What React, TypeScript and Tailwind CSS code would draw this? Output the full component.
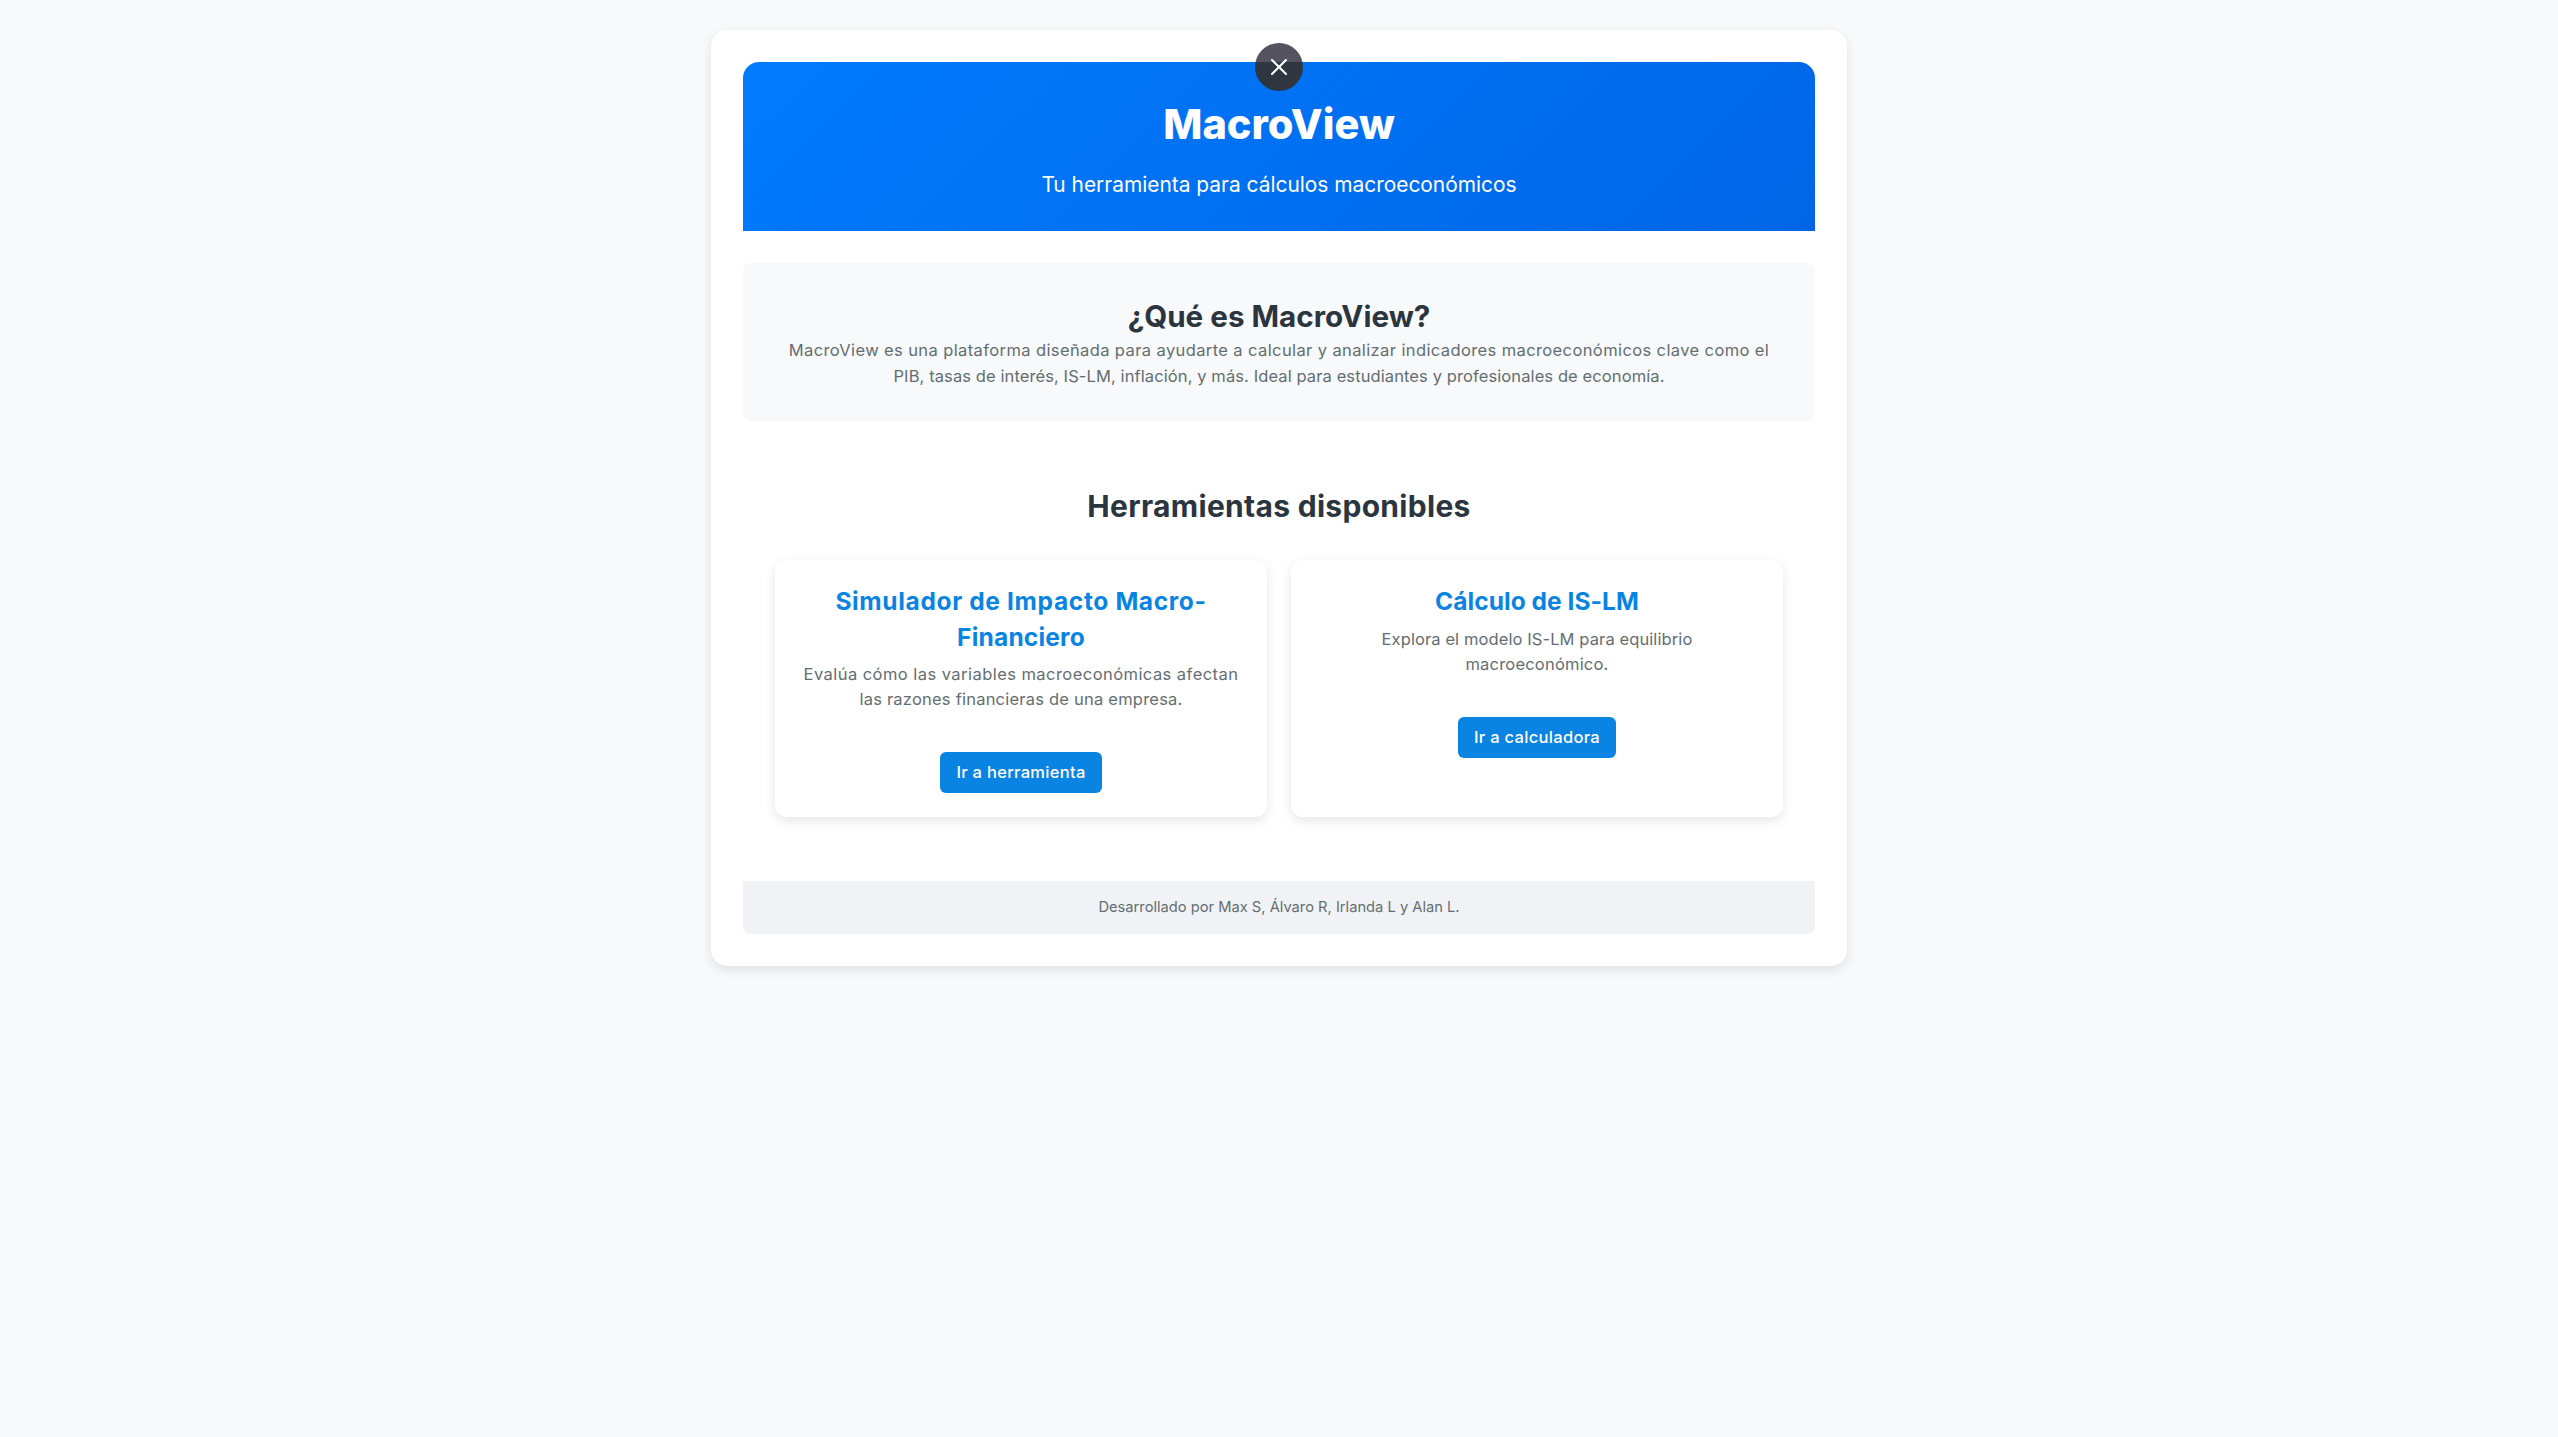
import { X } from "lucide-react"

const tools = [
  {
    title: [
      { line: "Simulador de Impacto Macro-", fit: "tracking-[0.65px]" },
      { line: "Financiero", fit: "tracking-[0.2px]" },
    ],
    text: [
      { line: "Evalúa cómo las variables macroeconómicas afectan", fit: "tracking-[0.45px]" },
      { line: "las razones financieras de una empresa.", fit: "tracking-[0.22px]" },
    ],
    cta: "Ir a herramienta",
  },
  {
    title: [{ line: "Cálculo de IS-LM", fit: "tracking-[0.05px]" }],
    text: [
      { line: "Explora el modelo IS-LM para equilibrio", fit: "tracking-[0.1px]" },
      { line: "macroeconómico.", fit: "tracking-[0.2px]" },
    ],
    cta: "Ir a calculadora",
  },
]

type Line = { line: string; fit: string }

function ToolCard({ title, text, cta }: { title: Line[]; text: Line[]; cta: string }) {
  return (
    <div className="flex flex-col items-center rounded-xl bg-white px-6 pt-6 pb-6 text-center shadow-[0_4px_12px_rgba(0,0,0,0.1)]">
      <h3 className="text-[24.5px] leading-[35.4px] font-bold text-[#0984e3]">
        {title.map((t) => (
          <span key={t.line} className={`block ${t.fit}`}>
            {t.line}
          </span>
        ))}
      </h3>
      <p className="mt-[7px] text-[16.5px] leading-[25px] text-[#636e72]">
        {text.map((t) => (
          <span key={t.line} className={`block ${t.fit}`}>
            {t.line}
          </span>
        ))}
      </p>
      <a className="mt-[40px] flex h-[41px] items-center rounded-md bg-[#0984e3] px-4 text-[16.5px] font-medium tracking-[0.3px] text-white">
        {cta}
      </a>
    </div>
  )
}

export default function App() {
  return (
    <div className="min-h-[1437px] bg-[#f8f9fa] pt-[30px] font-['Inter',sans-serif]">
      <div className="relative mx-auto w-[1136px] rounded-2xl bg-white p-8 shadow-[0_4px_12px_rgba(0,0,0,0.1)]">
        <button className="absolute top-[13px] left-1/2 flex h-12 w-12 -translate-x-1/2 items-center justify-center rounded-full bg-[linear-gradient(#55535f_19px,#2f3640_19px)] text-white">
          <X size={28} strokeWidth={1.8} />
        </button>

        <header className="flex h-[169px] flex-col items-center rounded-t-2xl bg-[linear-gradient(135deg,#007bff,#0066e6)] pt-[30px] text-white">
          <h1 className="text-[41.5px] leading-[64px] font-extrabold">MacroView</h1>
          <p className="mt-[12px] text-[20.9px] leading-[33px]">Tu herramienta para cálculos macroeconómicos</p>
        </header>

        <section className="mt-8 rounded-lg bg-[#f8f9fa] px-4 pt-8 pb-8 text-center">
          <h2 className="text-[29.6px] leading-[43px] font-bold text-[#2b3540]">¿Qué es MacroView?</h2>
          <p className="text-[16.5px] leading-[25.6px] text-[#636e72]">
            <span className="block tracking-[0.39px]">
              MacroView es una plataforma diseñada para ayudarte a calcular y analizar indicadores macroeconómicos clave como el
            </span>
            <span className="block tracking-[0.1px]">
              PIB, tasas de interés, IS-LM, inflación, y más. Ideal para estudiantes y profesionales de economía.
            </span>
          </p>
        </section>

        <section className="mt-[61px] px-8">
          <h2 className="text-center text-[30px] leading-[48px] font-bold tracking-[0.3px] text-[#2b3540]">
            Herramientas disponibles
          </h2>
          <div className="mt-[30px] grid grid-cols-2 gap-6">
            {tools.map((tool) => (
              <ToolCard key={tool.cta} {...tool} />
            ))}
          </div>
        </section>

        <footer className="mt-16 flex h-[53px] items-center justify-center rounded-b-lg bg-[#f1f2f6] text-[14.7px] text-[#636e72]">
          Desarrollado por Max S, Álvaro R, Irlanda L y Alan L.
        </footer>
      </div>
    </div>
  )
}
